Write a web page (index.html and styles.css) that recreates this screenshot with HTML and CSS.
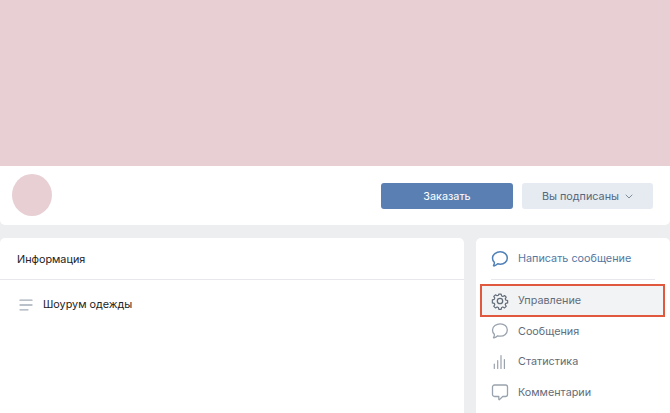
FILE: index.html
```html
<!DOCTYPE html>
<html lang="ru">
<head>
<meta charset="utf-8">
<title>Сообщество</title>
<link rel="stylesheet" href="styles.css">
</head>
<body>
<section class="hero">
  <div class="cover"></div>
  <div class="profile">
    <div class="avatar"></div>
    <div class="actions">
      <button class="btn btn-primary">Заказать</button>
      <button class="btn btn-secondary">Вы подписаны
        <svg class="chev" width="8" height="5" viewBox="0 0 8 5"><path d="M1 1l3 3 3-3" fill="none" stroke="#818c99" stroke-width="1" stroke-linecap="round" stroke-linejoin="round"/></svg>
      </button>
    </div>
  </div>
</section>
<div class="columns">
  <main class="card info">
    <h2 class="info-title">Информация</h2>
    <div class="info-row">
      <svg class="lines" width="14" height="12" viewBox="0 0 14 12"><path d="M1 1.2h12M1 6h12M1 10.8h8" fill="none" stroke="#a5adb8" stroke-width="1.3" stroke-linecap="round"/></svg>
      <span>Шоурум одежды</span>
    </div>
  </main>
  <aside class="card menu">
    <a class="write">
      <svg width="18" height="18" viewBox="0 0 18 18"><path d="M9.3 1.8c4 0 7 2.7 7 6.200s-3 6.200-7 6.200c-.9 0-1.800-.1-2.600-.4-.8.8-2.200 1.900-3.700 2.100-.5 0-.6-.3-.4-.6.500-.7.800-1.700.8-2.900C1.900 11.400 1.500 9.800 1.500 8c0-3.500 3.800-6.200 7.800-6.200z" fill="none" stroke="#5181b8" stroke-width="1.500" stroke-linejoin="round"/></svg>
      <span>Написать сообщение</span>
    </a>
    <div class="divider"></div>
    <a class="item item-active">
      <svg width="18" height="18" viewBox="0 0 18 18"><g fill="none" stroke="#626d7a" stroke-width="1.300" stroke-linejoin="round"><circle cx="9" cy="9" r="2.700"/><path d="M7.700 1.300h2.600l.5 2.100 1.400.6 1.900-1.100 1.800 1.800-1.100 1.900.6 1.400 2.100.5v2.600l-2.100.5-.6 1.400 1.100 1.900-1.800 1.800-1.900-1.100-1.400.6-.5 2.100H7.700l-.5-2.100-1.400-.6-1.900 1.100-1.800-1.800 1.100-1.900-.6-1.400-2.100-.5V7.700l2.100-.5.6-1.400-1.100-1.900 1.800-1.800 1.900 1.100 1.400-.6z" transform="translate(.9 .9) scale(.9)"/></g></svg>
      <span>Управление</span>
    </a>
    <a class="item">
      <svg width="18" height="18" viewBox="0 0 18 18"><path d="M9.300 1.800c4 0 7 2.700 7 6.200s-3 6.200-7 6.200c-.9 0-1.800-.1-2.600-.4-.8.8-2.200 1.900-3.700 2.100-.5 0-.6-.3-.4-.6.500-.7.800-1.700.8-2.900C1.900 11.400 1.500 9.800 1.500 8c0-3.500 3.800-6.200 7.800-6.200z" fill="none" stroke="#99a2ad" stroke-width="1.300" stroke-linejoin="round"/></svg>
      <span>Сообщения</span>
    </a>
    <a class="item">
      <svg width="18" height="18" viewBox="0 0 18 18"><path d="M3.300 11v4.500M6.700 7.500v8M10 2.500v13M13.400 6.500v9" fill="none" stroke="#99a2ad" stroke-width="1.200" stroke-linecap="round"/></svg>
      <span>Статистика</span>
    </a>
    <a class="item">
      <svg width="18" height="18" viewBox="0 0 18 18"><path d="M3.500 2h11A2 2 0 0 1 16.500 4v7.500a2 2 0 0 1-2 2h-2.800L8.500 16.600c-.3.300-.7.100-.7-.3v-2.800H3.500a2 2 0 0 1-2-2V4a2 2 0 0 1 2-2z" fill="none" stroke="#99a2ad" stroke-width="1.300" stroke-linejoin="round"/></svg>
      <span>Комментарии</span>
    </a>
  </aside>
</div>
</body>
</html>
```
FILE: styles.css
```css
* { box-sizing: border-box; }
html, body { height: 100%; }
body {
  margin: 0;
  height: 413px;
  overflow: hidden;
  background: #edeef0;
  font-family: Inter, Roboto, "Liberation Sans", sans-serif;
  font-size: 10.800px;
  -webkit-font-smoothing: antialiased;
}
.hero { background: #fff; border-radius: 0 0 5px 5px; }
.cover { height: 166px; background: #e8cfd4; }
.profile {
  height: 59px;
  display: flex;
  justify-content: space-between;
  padding: 8px 17px 0 12px;
}
.avatar { width: 40px; height: 42px; border-radius: 50%; background: #e8cfd4; }
.actions { display: flex; gap: 9px; padding-top: 9px; }
.btn {
  height: 26px;
  width: 132px;
  border: 0;
  border-radius: 3px;
  font: inherit;
  padding: 0;
}
.btn-primary { background: #5a7fb3; color: #fff; }
.btn-secondary { width: 131px; background: #e5ebf1; color: #55677d; }
.chev { margin-left: 3px; vertical-align: 1px; }
.columns { display: flex; gap: 12px; margin-top: 13px; }
.card { background: #fff; border-radius: 5px 5px 0 0; height: 175px; }
.info { width: 464px; }
.info-title {
  margin: 0;
  height: 42px;
  padding: 0 17px;
  border-bottom: 1px solid #e7e8ec;
  font: inherit;
  line-height: 44px;
  color: #222;
}
.info-row {
  display: flex;
  align-items: center;
  gap: 10px;
  padding: 17px 0 0 19px;
  color: #222;
  line-height: 16px;
}
.menu { width: 194px; }
.write, .item { display: flex; align-items: center; gap: 9px; }
.write { height: 41px; padding-left: 15px; color: #55779f; }
.divider { height: 1px; margin: 0 15px; background: #e7e8ec; }
.item { height: 30.500px; padding-left: 15px; color: #626d7a; }
.item-active {
  height: 33px;
  margin: 4px 5px -1px 4px;
  padding-left: 9px;
  border: 2px solid #e0593f;
  background: #f2f3f5;
}
```
